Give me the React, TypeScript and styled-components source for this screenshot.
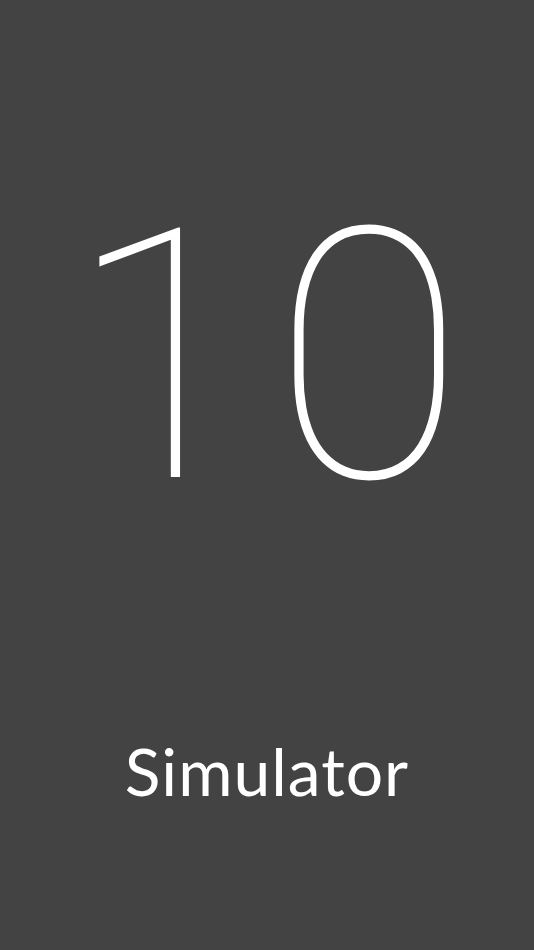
import React from "react";
import styled, { createGlobalStyle } from "styled-components";

const Global = createGlobalStyle`
  html, body { margin: 0; padding: 0; background: #434343; }
  #root { height: 950px; }
`;

const Screen = styled.div`
  width: 534px;
  height: 950px;
  background: #434343;
  display: flex;
  flex-direction: column;
  align-items: center;
  color: #ffffff;
  overflow: hidden;
`;

const Version = styled.div`
  margin-top: 182px;
  font-family: "Roboto", sans-serif;
  font-weight: 100;
  font-size: 350px;
  line-height: 350px;
  letter-spacing: 14px;
  padding-left: 12px;
`;

const Label = styled.div`
  margin-top: 206px;
  font-family: "Lato", sans-serif;
  font-weight: 400;
  font-size: 66px;
  line-height: 66px;
  letter-spacing: 1px;
`;

export default function App() {
  return (
    <>
      <Global />
      <Screen>
        <Version>10</Version>
        <Label>Simulator</Label>
      </Screen>
    </>
  );
}
